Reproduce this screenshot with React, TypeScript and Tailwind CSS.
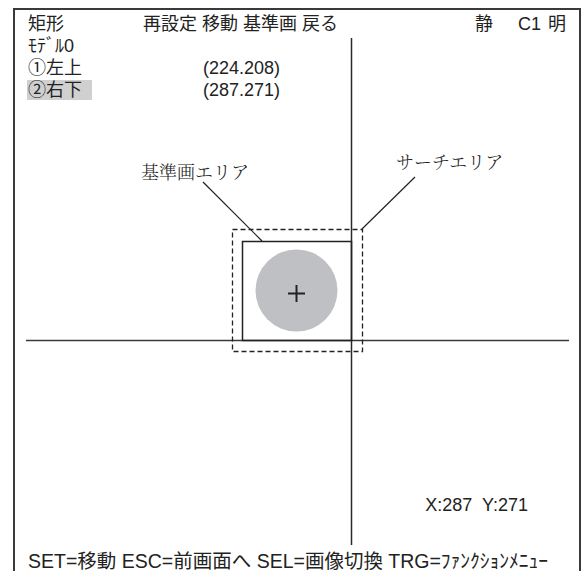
import React from 'react';

const sans = "font-['Liberation_Sans','Noto_Sans_CJK_JP',sans-serif]";
const mincho = "font-['Noto_Serif_CJK_JP','Noto_Sans_CJK_JP',serif]";

function Overlay() {
  // crosshair + search / reference areas, drawn in page coordinates
  return (
    <svg className="absolute inset-0 pointer-events-none" width="585" height="571" viewBox="0 0 585 571">
      <line x1="26" y1="340.5" x2="569" y2="340.5" stroke="#3a3a3a" strokeWidth="1.5" />
      <line x1="351.5" y1="38" x2="351.5" y2="545" stroke="#2a2a2a" strokeWidth="1.5" />
      <circle cx="296.5" cy="290.5" r="41" fill="#bfc0c4" />
      <rect x="242.5" y="241.5" width="109" height="99" fill="none" stroke="#222" strokeWidth="1.5" />
      <rect x="232.5" y="229.5" width="130" height="122" fill="none" stroke="#222" strokeWidth="1.3" strokeDasharray="5 3" />
      <line x1="288" y1="293.5" x2="305" y2="293.5" stroke="#222" strokeWidth="2" />
      <line x1="296.5" y1="285" x2="296.5" y2="302" stroke="#222" strokeWidth="2" />
      <line x1="203" y1="182" x2="262" y2="241" stroke="#222" strokeWidth="1.2" />
      <line x1="415" y1="177" x2="362" y2="229" stroke="#222" strokeWidth="1.2" />
    </svg>
  );
}

export default function App() {
  return (
    <div className={`relative w-[585px] h-[571px] overflow-hidden bg-white text-[#222] ${sans}`}>
      <div className="ml-[13px] mt-[8px] w-[568px] h-[563px] border-l-2 border-t-2 border-r-2 border-[#3a3a3a] flex flex-col pl-[13px] pt-[3px]">
        <div className="flex items-center h-[22px] text-[18px] leading-[22px]">
          <span className="w-[115px]">矩形</span>
          <span className="w-[332px]">再設定 移動 基準画 戻る</span>
          <span className="w-[43px]">静</span>
          <span className="w-[30px]">C1</span>
          <span>明</span>
        </div>
        <div className="h-[22px] leading-[22px] text-[18px]">ﾓﾃﾞﾙ0</div>
        <div className="flex items-center h-[22px] leading-[22px] text-[18px]">
          <span className="w-[175px]">①左上</span>
          <span>(224.208)</span>
        </div>
        <div className="flex items-center h-[22px] leading-[22px] text-[18px]">
          <span className="w-[175px]">
            <span className="bg-[#d0d0d0] pr-[10px] -ml-px pl-px">②右下</span>
          </span>
          <span>(287.271)</span>
        </div>
        <div className="flex-1 flex flex-col justify-end items-end">
          <div className="pr-[51px] mb-[35px] h-[22px] leading-[22px] text-[18px] whitespace-pre">X:287  Y:271</div>
        </div>
        <div className="h-[20px] leading-[20px] text-[19.5px] whitespace-nowrap">
          SET=移動 ESC=前画面へ SEL=画像切換 TRG=ﾌｧﾝｸｼｮﾝﾒﾆｭｰ
        </div>
      </div>
      <Overlay />
      <span className={`absolute left-[141px] top-[160px] leading-[22px] text-[18px] font-light ${mincho}`}>基準画エリア</span>
      <span className={`absolute left-[396px] top-[150px] leading-[22px] text-[18px] font-light ${mincho}`}>サーチエリア</span>
    </div>
  );
}
